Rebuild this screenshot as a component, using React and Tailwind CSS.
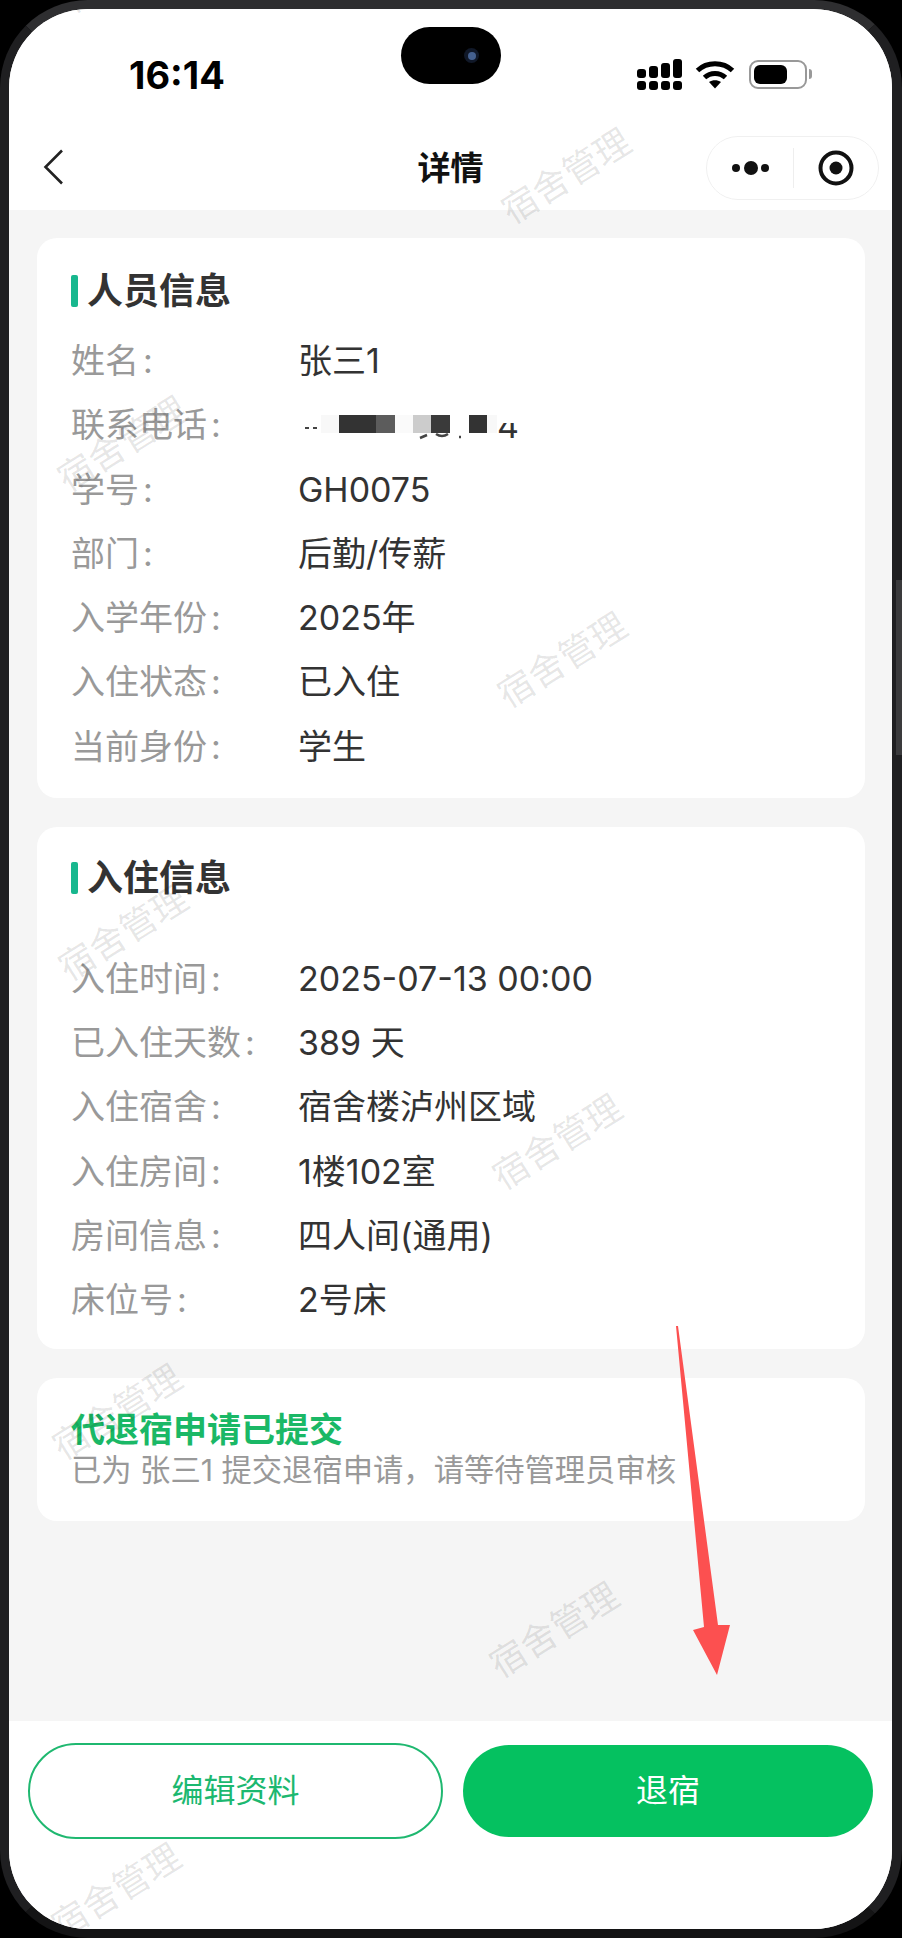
// App.jsx
import React from 'react';

const personRows = [
  ['姓名', '张三1'],
  ['联系电话', null],
  ['学号', 'GH0075'],
  ['部门', '后勤/传薪'],
  ['入学年份', '2025年'],
  ['入住状态', '已入住'],
  ['当前身份', '学生'],
];

const stayRows = [
  ['入住时间', '2025-07-13 00:00'],
  ['已入住天数', '389 天'],
  ['入住宿舍', '宿舍楼泸州区域'],
  ['入住房间', '1楼102室'],
  ['房间信息', '四人间(通用)'],
  ['床位号', '2号床'],
];

// 水印位置
const marks = [
  ['left-[45px]', 'top-[-64px]'],
  ['left-[485px]', 'top-[147px]'],
  ['left-[41px]', 'top-[415px]'],
  ['left-[481px]', 'top-[631px]'],
  ['left-[42px]', 'top-[904px]'],
  ['left-[476px]', 'top-[1113px]'],
  ['left-[36px]', 'top-[1383px]'],
  ['left-[473px]', 'top-[1601px]'],
  ['left-[35px]', 'top-[1862px]'],
];

const SignalIcon = () => (
  <svg width="46" height="31" viewBox="0 0 46 31" fill="#000">
    <rect x="0" y="22" width="9" height="9" rx="3" />
    <rect x="12" y="22" width="9" height="9" rx="3" />
    <rect x="24" y="22" width="9" height="9" rx="3" />
    <rect x="36" y="22" width="9" height="9" rx="3" />
    <rect x="0" y="10" width="9" height="9" rx="3" />
    <rect x="12" y="7" width="9" height="12" rx="3" />
    <rect x="24" y="4" width="9" height="15" rx="3" />
    <rect x="36" y="0" width="9" height="19" rx="3" />
  </svg>
);

const WifiIcon = () => (
  <svg width="40" height="29" viewBox="0 0 40 29" fill="none">
    <path d="M2.5 10.5 C12 1.5 28 1.5 37.5 10.5" stroke="#000" strokeWidth="5" />
    <path d="M9.5 17.5 C15.5 12 24.5 12 30.5 17.5" stroke="#000" strokeWidth="5" />
    <path d="M14 22 C17.5 19.5 22.5 19.5 26 22 L20 28.5 Z" fill="#000" />
  </svg>
);

const Row = ({ label, value }) => (
  <div className="flex items-center h-[64.25px] text-[34px] leading-[40px]">
    <div className="w-[227px] shrink-0 text-[#999999]">
      {label}
      <span className="ml-[4px]">:</span>
    </div>
    <div className="text-[#333333]">{value ?? <Phone />}</div>
  </div>
);

// 手机号打码
const Phone = () => (
  <div className="relative flex items-start h-[26px]">
    <div className="w-[23px] self-end flex gap-[4px] pl-[7px] pb-[9px]">
      <span className="w-[4px] h-[2px] bg-[#444444]" />
      <span className="w-[4px] h-[2px] bg-[#444444]" />
    </div>
    <div className="mt-[3px] flex h-[18px]">
      <span className="w-[18px] bg-[#f8f8f8]" />
      <span className="w-[37px] bg-[#333333]" />
      <span className="w-[19px] bg-[#5c5c5c]" />
      <span className="w-[18px] bg-[#fafafa]" />
      <span className="w-[18px] bg-[#cccccc]" />
      <span className="w-[19px] bg-[#3a3a3a]" />
      <span className="w-[19px]" />
      <span className="w-[18px] bg-[#333333]" />
      <span className="w-[10px] bg-[#f8f8f8]" />
    </div>
    <span className="self-end h-[15px] overflow-hidden flex items-end leading-[24px] text-[34px] text-[#333333]">4</span>
    <svg className="absolute left-[120px] top-[20px]" width="50" height="8" viewBox="0 0 50 8" fill="none" stroke="#444444" strokeWidth="2.5">
      <path d="M2 6 L9 3" />
      <path d="M18 2 Q24 6 30 2" />
      <path d="M41 5 L43 5" />
    </svg>
  </div>
);

const SectionTitle = ({ children }) => (
  <div className="flex items-center h-[40px]">
    <span className="w-[7px] h-[32px] rounded-[2px] bg-[#18b78e]" />
    <span className="ml-[9px] text-[36px] leading-[40px] font-bold text-[#333333]">{children}</span>
  </div>
);

const App = () => {
  return (
    <div
      className="relative w-[902px] h-[1938px] bg-black overflow-hidden"
      style={{ fontFamily: 'Inter, "Noto Sans CJK SC", sans-serif' }}
    >
      {/* 侧边按键 */}
      <div className="absolute left-0 top-[348px] w-[7px] h-[55px] bg-[#3a3a3c]" />
      <div className="absolute left-0 top-[503px] w-[7px] h-[99px] bg-[#3a3a3c]" />
      <div className="absolute left-0 top-[640px] w-[7px] h-[97px] bg-[#3a3a3c]" />

      <div className="relative h-full rounded-[88px] border-t-[9px] border-b-[9px] border-l-[9px] border-r-[10px] border-t-[#2e2e30] border-l-[#1f1f21] border-r-[#1f1f21] border-b-[#141415]">
        <div className="relative h-full rounded-[79px] overflow-hidden bg-[#f5f5f5] flex flex-col">
          {/* 状态栏 + 导航 */}
          <header className="bg-white h-[201px] shrink-0">
            <div className="h-[130px] flex items-center justify-between pl-[120px] pr-[80px]">
              <span className="mt-[2px] text-[38px] leading-none font-bold text-black">16:14</span>
              <div className="flex items-center gap-[12px]">
                <SignalIcon />
                <WifiIcon />
                <div className="ml-[2px] flex items-center gap-[2px]">
                  <div className="w-[58px] h-[29px] rounded-[9px] border-[2px] border-[#999999] p-[3px] pr-[18px]">
                    <div className="w-full h-full rounded-[6px] bg-black" />
                  </div>
                  <div className="w-[3px] h-[10px] rounded-r-[3px] bg-[#999999]" />
                </div>
              </div>
            </div>
            <div className="flex items-center h-[71px] pb-[14px]">
              <div className="flex-1">
                <svg className="ml-[34px] -mt-[1px]" width="20" height="36" viewBox="0 0 20 36" fill="none" stroke="#222222" strokeWidth="2.6">
                  <path d="M19 1.5 L2.5 18 L19 34.5" />
                </svg>
              </div>
              <h1 className="text-[33px] leading-[40px] font-bold text-[#111111]">详情</h1>
              <div className="flex-1 flex justify-end">
                <div className="mr-[13px] flex items-center w-[173px] h-[64px] rounded-[32px] border border-[#f0f0f0] bg-white">
                  <svg className="ml-[24px]" width="40" height="16" viewBox="0 0 40 16" fill="#111111">
                    <circle cx="5" cy="8" r="4" />
                    <circle cx="20" cy="8" r="7" />
                    <circle cx="34" cy="8" r="4" />
                  </svg>
                  <div className="ml-[22px] w-px h-[40px] bg-[#eeeeee]" />
                  <svg className="ml-[24px]" width="36" height="36" viewBox="0 0 36 36" fill="none">
                    <circle cx="18" cy="18" r="15.5" stroke="#111111" strokeWidth="4" />
                    <circle cx="18" cy="18" r="6.5" fill="#111111" />
                  </svg>
                </div>
              </div>
            </div>
          </header>

          {/* 内容 */}
          <main className="flex-1 flex flex-col gap-[29px] pt-[28px] pl-[28px] pr-[27px]">
            <section className="bg-white rounded-[20px] pt-[33px] pb-[19px] pl-[34px]">
              <SectionTitle>人员信息</SectionTitle>
              <div className="mt-[18px]">
                {personRows.map(([label, value]) => (
                  <Row key={label} label={label} value={value} />
                ))}
              </div>
            </section>

            <section className="bg-white rounded-[20px] pt-[31px] pb-[17px] pl-[34px]">
              <SectionTitle>入住信息</SectionTitle>
              <div className="mt-[49px]">
                {stayRows.map(([label, value]) => (
                  <Row key={label} label={label} value={value} />
                ))}
              </div>
            </section>

            <section className="bg-white rounded-[20px] pt-[32px] pb-[31px] pl-[34px]">
              <div className="text-[34px] leading-[40px] font-bold text-[#1ab866]">代退宿申请已提交</div>
              <div className="text-[30.3px] leading-[40px] text-[#999999]">已为 张三1 提交退宿申请，请等待管理员审核</div>
            </section>
          </main>

          {/* 底部按钮 */}
          <footer className="bg-white h-[208px] shrink-0 pt-[22px] pl-[19px] pr-[19px]">
            <div className="flex items-center gap-[20px]">
              <button className="w-[415px] h-[96px] rounded-[48px] border-2 border-[#1fb870] bg-white text-[32px] text-[#1cb870]">编辑资料</button>
              <button className="w-[410px] h-[92px] rounded-[46px] bg-[#05c160] text-[32px] text-white">退宿</button>
            </div>
          </footer>

          {/* 水印 */}
          {marks.map(([left, top]) => (
            <span
              key={left + top}
              className={`absolute ${left} ${top} w-[144px] text-center -rotate-[32deg] text-[36px] leading-[40px] text-black/10 pointer-events-none whitespace-nowrap`}
            >
              宿舍管理
            </span>
          ))}
        </div>
      </div>

      {/* 右侧按键 */}
      <div className="absolute right-0 top-[580px] w-[6px] h-[175px] bg-[#3a3a3c]" />

      {/* 灵动岛 */}
      <div className="absolute left-[401px] top-[27px] w-[100px] h-[57px] rounded-[29px] bg-black flex items-center justify-end pr-[22px]">
        <div className="w-[15px] h-[15px] rounded-full bg-[#101828] flex items-center justify-center">
          <div className="w-[8px] h-[8px] rounded-full bg-[#44608f]" />
        </div>
      </div>

      {/* 红色箭头标注 */}
      <svg className="absolute left-[670px] top-[1320px]" width="70" height="360" viewBox="0 0 70 360" fill="#fc5050">
        <path d="M6 6 L8 6 L48 305 L60 305 L47 355 L23 310 L34 307 Z" />
      </svg>
    </div>
  );
};

export default App;
